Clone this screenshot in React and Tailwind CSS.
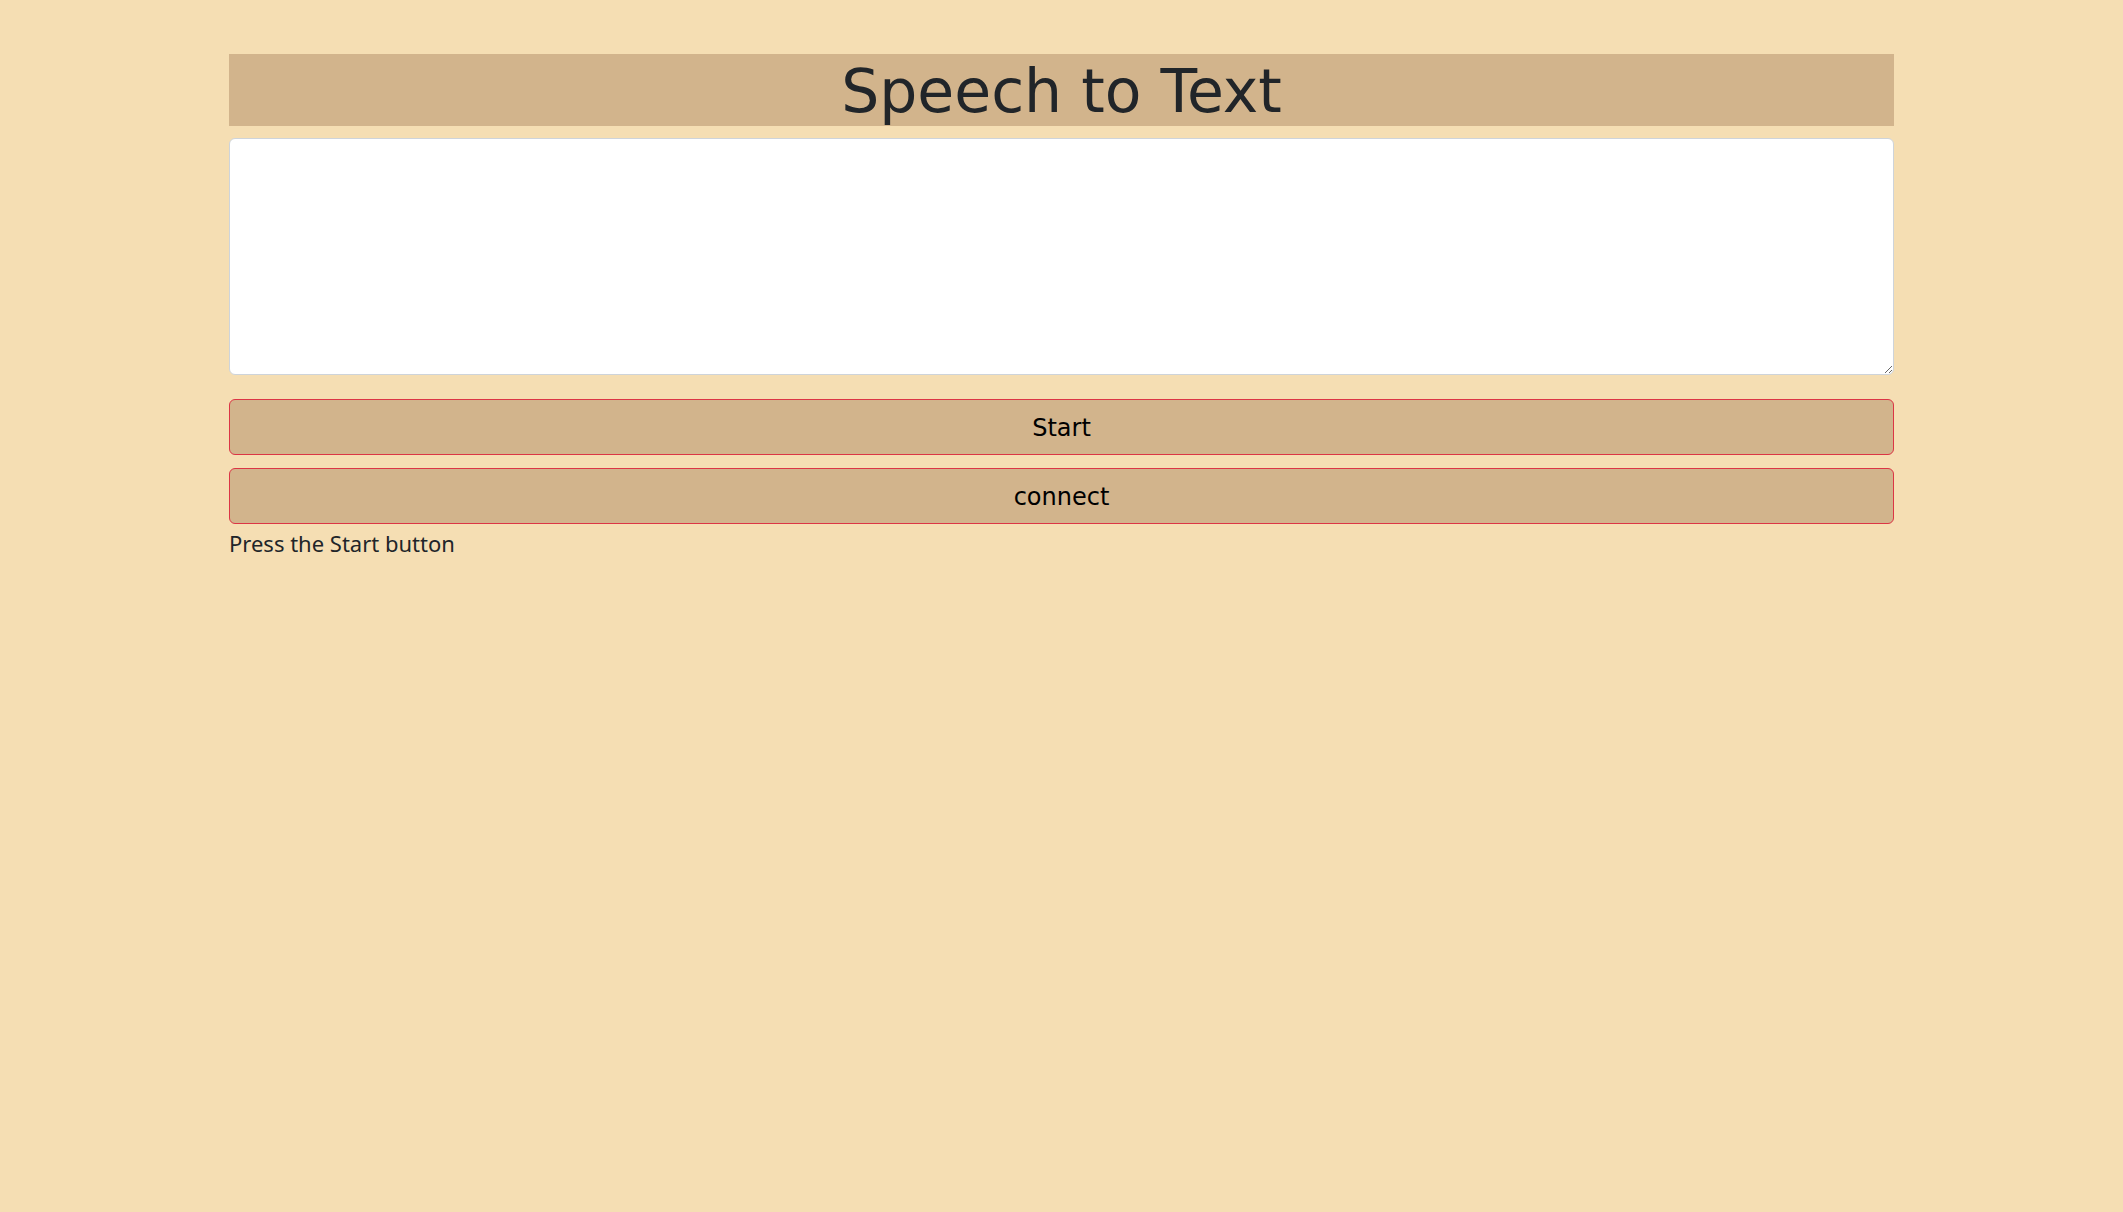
export default function App() {
  return (
    <div className="min-h-screen w-full bg-[#f5deb3] pt-[54px]" style={{ fontFamily: '"Noto Sans", sans-serif' }}>
      <div className="mx-auto flex w-[1665px] flex-col">
        {/* title bar */}
        <div className="flex h-[72px] items-center justify-center bg-[#d2b48c]">
          <h1 className="pt-[2px] text-[60px] leading-none text-[#212529] font-['DejaVu_Sans',sans-serif]">Speech to Text</h1>
        </div>

        <textarea className="mt-[12px] h-[237px] w-full resize-y rounded-[6px] border border-[#ced4da] bg-white p-3 text-[22px] outline-none" />

        <button className="mt-[24px] h-[56px] w-full rounded-[6px] border border-[#dc3545] bg-[#d2b48c] pt-[2px] text-[24px] text-black font-['DejaVu_Sans',sans-serif]">
          Start
        </button>
        <button className="mt-[13px] h-[56px] w-full rounded-[6px] border border-[#dc3545] bg-[#d2b48c] pt-[2px] text-[24px] text-black font-['DejaVu_Sans',sans-serif]">
          connect
        </button>

        <p className="mt-[3px] text-[22px] leading-[1.5] text-[#212529]">Press the Start button</p>
      </div>
    </div>
  )
}
